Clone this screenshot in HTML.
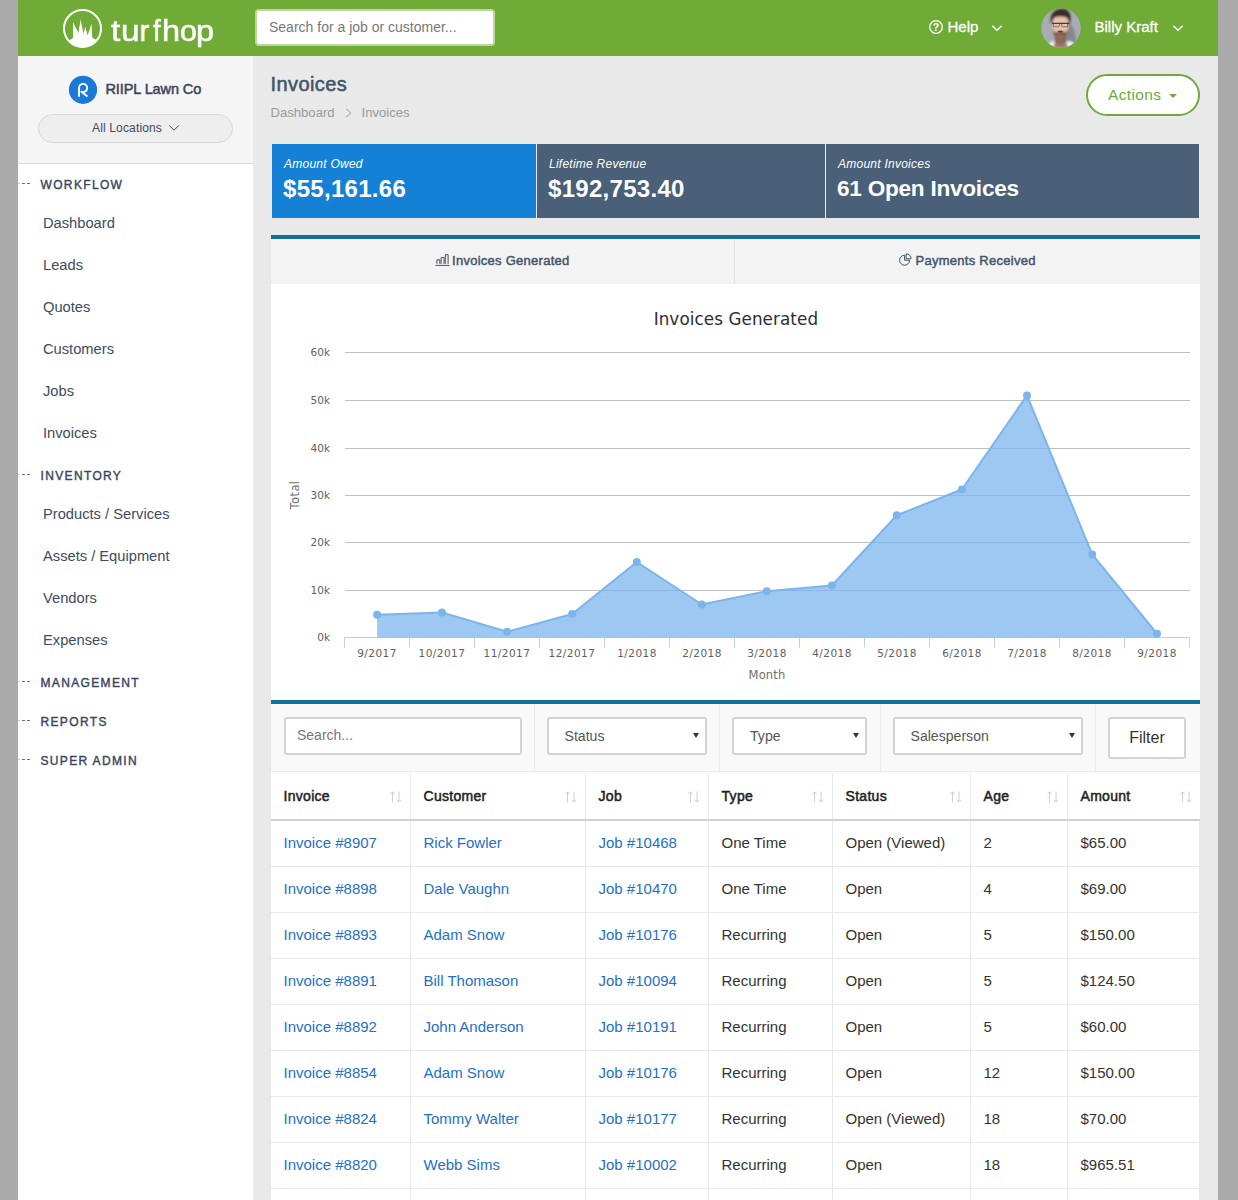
<!DOCTYPE html>
<html lang="en">
<head>
<meta charset="utf-8">
<title>Invoices - turfhop</title>
<style>
*{box-sizing:border-box;margin:0;padding:0}
html,body{width:1238px;height:1200px;overflow:hidden}
body{background:#aaaaaa;font-family:"Liberation Sans",sans-serif;color:#3d4b63;position:relative}
.abs{position:absolute}
#wrap{position:absolute;left:18px;top:0;width:1200px;height:1200px;background:#e9e9e9;overflow:hidden}
/* header */
#hdr{position:absolute;left:0;top:0;width:1200px;height:56px;background:#70ab38}
#hsearch{position:absolute;left:237px;top:9px;width:240px;height:37px;background:#fff;border:2px solid #b9d89a;border-radius:4px;font-size:14px;color:#777;line-height:33px;padding-left:12px;white-space:nowrap}
.hw{position:absolute;color:#fff;font-size:15px;line-height:20px;white-space:nowrap;-webkit-text-stroke:0.3px #fff}
/* sidebar */
#side{position:absolute;left:0;top:56px;width:235px;height:1144px;background:#fff}
#sidetop{position:absolute;left:0;top:0;width:235px;height:108px;background:#f5f5f5;border-bottom:1px solid #dcdcdc}
#co{position:absolute;left:87.5px;top:23px;font-size:14.5px;font-weight:normal;-webkit-text-stroke:0.5px #3a465a;color:#3a465a;line-height:20px;white-space:nowrap;letter-spacing:-0.1px}
#loc{position:absolute;left:20px;top:58px;width:195px;height:29px;border:1px solid #d9d9d9;border-radius:15px;background:#eeeeee;font-size:12px;letter-spacing:0.15px;color:#3d4b63;line-height:27px;text-align:left;padding-left:53px;white-space:nowrap}
.sh{position:absolute;left:22.5px;font-size:12px;font-weight:normal;-webkit-text-stroke:0.4px #3a465f;letter-spacing:1.35px;color:#3a465f;line-height:16px;white-space:nowrap}
.sd{position:absolute;left:0;width:12px;height:1px;margin-top:-2px;background:linear-gradient(90deg,#c9ced6 0,#c9ced6 2.4px,transparent 2.4px,transparent 4.1px,#65728a 4.1px,#65728a 7.3px,transparent 7.3px,transparent 8.7px,#65728a 8.7px,#65728a 11.9px,transparent 11.9px)}
.si{position:absolute;left:25px;font-size:14.7px;color:#3d4b63;line-height:20px;white-space:nowrap}
/* main */
#title{position:absolute;left:252.5px;top:71px;font-size:20px;font-weight:normal;-webkit-text-stroke:0.55px #44536a;color:#44536a;line-height:26px;letter-spacing:0.4px}
#crumb{position:absolute;left:252.5px;top:104px;font-size:13.1px;color:#999;line-height:18px;white-space:nowrap}
#actions{position:absolute;left:1068px;top:74px;width:114px;height:42px;border:2px solid #70ab38;border-radius:21px;background:#fff;color:#70ab38;font-size:15.5px;line-height:37.5px;padding-left:20px;white-space:nowrap;letter-spacing:0.38px}
.card{position:absolute;top:144px;height:74px;color:#fff}
.card i{position:absolute;left:12px;top:13px;font-size:12px;letter-spacing:0.25px;line-height:14px;white-space:nowrap}
.card b{position:absolute;left:11px;top:31.2px;font-size:24px;line-height:28px;white-space:nowrap;letter-spacing:0.3px}
.panel{position:absolute;left:253px;width:929px;background:#fff;border-top:4px solid #0f7098}
.tab{position:absolute;top:0;height:45px;background:#f3f3f3;font-size:13px;color:#44536a;line-height:44px;white-space:nowrap}
.tt{top:0;font-weight:normal;-webkit-text-stroke:0.45px #44536a;letter-spacing:0.27px}

#tp{position:absolute;left:253px;top:700px;width:929px;height:500px;background:#fff;border-top:4px solid #0f7098}
.fc{position:absolute;top:0;height:68px;background:#f9f9f9;border-right:1px solid #ececec;border-bottom:1px solid #ececec}
.inp{position:absolute;top:13px;height:37.5px;background:#fff;border:2px solid #d3d3d3;border-radius:3px;font-size:14.1px;color:#555;line-height:34.5px;white-space:nowrap}
.inp .ar{position:absolute;right:6.5px;top:13.6px;width:0;height:0;border-left:3px solid transparent;border-right:3px solid transparent;border-top:5.6px solid #333}
.th{position:absolute;top:69px;height:48px;border-right:1px solid #e9e9e9;border-bottom:2px solid #cfcfcf;background:#fff;font-size:14px;font-weight:normal;-webkit-text-stroke:0.5px #222;color:#222;line-height:47px;padding-left:12.5px;white-space:nowrap;letter-spacing:0.3px}
.th svg{position:absolute;right:7.4px;top:18px}
.td{position:absolute;height:46px;border-right:1px solid #e9e9e9;border-bottom:1px solid #e9e9e9;background:#fff;font-size:15px;color:#333;line-height:43px;padding-left:12.5px;white-space:nowrap}
.td.l{color:#2470c8}
</style>
</head>
<body>
<div id="wrap">
  <div id="hdr">
    <svg class="abs" style="left:40px;top:4px" width="50" height="50" viewBox="0 0 50 50">
      <circle cx="24.5" cy="24.5" r="18.5" fill="none" stroke="#fff" stroke-width="2"/>
      <path d="M11.2 36.6 L14.6 34.2 L15.1 33.8 L15 18.2 L20.5 29 L22.6 15.3 L25.4 29.8 L27.4 22.8 L29.6 31.6 L33.5 19.8 L34.3 33.6 L37.4 35.6 L39 35 L44 35 L44 46 L5 46 L5 36 L10.4 36 Z" fill="#fff" clip-path="url(#lgc)"/><clipPath id="lgc"><circle cx="24.5" cy="24.5" r="19"/></clipPath>
    </svg>
    <div class="abs" id="brand" style="left:0;top:13px;width:230px;height:36px;font-size:29px;line-height:36px;color:#fff;-webkit-text-stroke:0.5px #fff;white-space:nowrap"><span class="abs" style="left:92.6px;top:0;transform:scaleX(1.15);transform-origin:0 0">t</span><span class="abs" style="left:102.8px;top:0;transform:scaleX(1.15);transform-origin:0 0">u</span><span class="abs" style="left:121.6px;top:0;transform:scaleX(1.0);transform-origin:0 0">r</span><span class="abs" style="left:135.0px;top:0;transform:scaleX(0.95);transform-origin:0 0">f</span><span class="abs" style="left:144.2px;top:0;transform:scaleX(1.12);transform-origin:0 0">h</span><span class="abs" style="left:162.0px;top:0;transform:scaleX(1.05);transform-origin:0 0">o</span><span class="abs" style="left:178.0px;top:0;transform:scaleX(1.12);transform-origin:0 0">p</span></div>
    <div id="hsearch">Search for a job or customer...</div>
    <svg class="abs" style="left:909.6px;top:18.6px" width="16" height="16" viewBox="0 0 16 16">
      <circle cx="8" cy="8" r="6.3" fill="none" stroke="#fff" stroke-width="1.3"/>
      <text x="8" y="11.7" font-size="10.5" font-weight="bold" fill="#fff" text-anchor="middle" font-family="Liberation Sans, sans-serif">?</text>
    </svg>
    <div class="hw" style="left:929.5px;top:17px">Help</div>
    <svg class="abs" style="left:973px;top:23.6px" width="12" height="8" viewBox="0 0 12 8"><path d="M1.3 1.8 L6 6.3 L10.7 1.8" fill="none" stroke="#fff" stroke-width="1.4"/></svg>
    <svg class="abs" style="left:1023px;top:8px" width="40" height="40" viewBox="0 0 40 40">
      <defs>
        <clipPath id="avc"><circle cx="20" cy="20" r="19.8"/></clipPath>
        <filter id="avb" x="-20%" y="-20%" width="140%" height="140%"><feGaussianBlur stdDeviation="0.82"/></filter>
      </defs>
      <g clip-path="url(#avc)">
        <rect width="40" height="40" fill="#a8abb2"/>
        <g filter="url(#avb)">
          <path d="M27 14 Q33 18 34 26 L36 40 L24 40 Z" fill="#85888f"/>
          <path d="M11 33.5 Q6.5 35 4 40 L36 40 Q34.5 35 29 33.3 Z" fill="#f3f1f0"/>
          <path d="M14 28 L13.6 35.5 Q19 41 25.4 35 L25 28 Z" fill="#8e6858"/>
          <path d="M13.6 35 L12.5 40 L27 40 L25.4 34.5 Q19 38.5 13.6 35 Z" fill="#a57d6c"/>
          <path d="M11.6 14 Q11.2 8 19.4 7.6 Q27.4 8 27.2 14 L27 22 Q26.6 31.6 19.4 31.8 Q12.2 31.6 11.8 22 Z" fill="#e6c2ad"/>
          <path d="M11.7 20.5 Q12 31.5 19.4 32 Q26.8 31.5 27.1 20.5 Q25.5 25.5 22.6 23.6 Q19.4 22.6 16.2 23.6 Q13.3 25.5 11.7 20.5 Z" fill="#6f5242" fill-opacity="0.9"/>
          <path d="M15.3 26 Q19.4 28.8 23.5 26 Q22.5 30.6 19.4 30.8 Q16.3 30.6 15.3 26 Z" fill="#c39a85" fill-opacity="0.35"/>
          <path d="M9.8 15.5 Q8.6 6.5 13.5 3.2 Q18 0 23.5 1 Q28.6 2.4 29.6 8.6 Q30 12.5 28.6 16.4 L27.3 15 Q27.6 11 25.6 9.6 Q22 8 17.2 8.6 Q13.4 8.8 12.2 11 L11.5 14.5 Z" fill="#3b2c25"/>
        </g>
        <path d="M11 15.4 H28" stroke="#2a2626" stroke-width="1.2" stroke-opacity="0.85"/>
        <path d="M12.3 15.3 V18 Q12.4 18.8 13.3 18.8 H17.3 Q18.3 18.8 18.4 18 V15.3 M20.6 15.3 V18 Q20.7 18.8 21.6 18.8 H25.6 Q26.6 18.8 26.7 18 V15.3" fill="none" stroke="#3a3434" stroke-width="0.8" stroke-opacity="0.7"/>
        <ellipse cx="19.3" cy="23.6" rx="2.6" ry="0.8" fill="#4a2226" fill-opacity="0.8"/>
      </g>
    </svg>
    <div class="hw" style="left:1076.5px;top:17px">Billy Kraft</div>
    <svg class="abs" style="left:1154px;top:23.6px" width="12" height="8" viewBox="0 0 12 8"><path d="M1.3 1.8 L6 6.3 L10.7 1.8" fill="none" stroke="#fff" stroke-width="1.4"/></svg>
  </div>
  <div id="side">
    <div id="sidetop">
      <svg class="abs" style="left:50px;top:19px" width="30" height="30" viewBox="0 0 30 30">
        <circle cx="15" cy="14.8" r="14.1" fill="#1b7ad9"/>
        <path d="M11 21.8 V12.9 A4.1 4.1 0 1 1 13.4 16.7 L19.5 21.4" fill="none" stroke="#fff" stroke-width="1.9" stroke-linejoin="round"/>
      </svg>
      <div id="co">RIIPL Lawn Co</div>
      <div id="loc">All Locations
        <svg class="abs" style="left:128.7px;top:8.8px" width="12" height="8" viewBox="0 0 12 8"><path d="M1.3 1.5 L6 6.2 L10.7 1.5" fill="none" stroke="#3d4b63" stroke-width="1"/></svg>
      </div>
    </div>
    <div class="sd" style="top:128.5px"></div><div class="sh" style="top:120.5px">WORKFLOW</div>
    <div class="si" style="top:157px">Dashboard</div>
    <div class="si" style="top:199px">Leads</div>
    <div class="si" style="top:241px">Quotes</div>
    <div class="si" style="top:283px">Customers</div>
    <div class="si" style="top:325px">Jobs</div>
    <div class="si" style="top:367px">Invoices</div>
    <div class="sd" style="top:419.5px"></div><div class="sh" style="top:411.5px">INVENTORY</div>
    <div class="si" style="top:448px">Products / Services</div>
    <div class="si" style="top:490px">Assets / Equipment</div>
    <div class="si" style="top:532px">Vendors</div>
    <div class="si" style="top:574px">Expenses</div>
    <div class="sd" style="top:626.5px"></div><div class="sh" style="top:618.5px">MANAGEMENT</div>
    <div class="sd" style="top:665.5px"></div><div class="sh" style="top:657.5px">REPORTS</div>
    <div class="sd" style="top:704.5px"></div><div class="sh" style="top:696.5px">SUPER ADMIN</div>
  </div>
  <div id="title">Invoices</div>
  <div id="crumb">Dashboard<svg style="margin:0 9.5px 0 10.5px;vertical-align:-0.5px" width="7" height="10" viewBox="0 0 7 10"><path d="M1 0.7 L5.8 5 L1 9.3" fill="none" stroke="#999" stroke-width="1"/></svg>Invoices</div>
  <div id="actions">Actions<span class="abs" style="left:81.3px;top:18px;width:0;height:0;border-left:4.3px solid transparent;border-right:4.3px solid transparent;border-top:4.2px solid #70ab38"></span></div>
  <div class="card" style="left:254px;width:264px;background:#1581d6"><i>Amount Owed</i><b>$55,161.66</b></div>
  <div class="card" style="left:519px;width:288px;background:#4a5f78"><i>Lifetime Revenue</i><b>$192,753.40</b></div>
  <div class="card" style="left:808px;width:373px;background:#4a5f78"><i>Amount Invoices</i><b style="font-size:22.6px;letter-spacing:-0.25px">61 Open Invoices</b></div>
  <div class="panel" style="top:235px;height:465px">
    <div class="tab" style="left:0;width:463px">
      <svg class="abs" style="left:163.5px;top:15px" width="15" height="12" viewBox="0 0 15 12"><path d="M0.4 11.4 H14.6 M1.9 9.9 V5.8 H4.8 V9.9 M6.1 9.9 V3.6 H9 V9.9 M10.3 9.9 V0.7 H13.1 V9.9" fill="none" stroke="#44536a" stroke-width="1"/></svg>
      <span class="abs tt" style="left:181px">Invoices Generated</span></div>
    <div class="abs" style="left:463px;top:0;width:1px;height:45px;background:#e0e0e0"></div>
    <div class="tab" style="left:464px;width:465px">
      <svg class="abs" style="left:163.5px;top:13.5px" width="14" height="14" viewBox="0 0 14 14"><path d="M5.6 2.2 A5 5 0 1 0 10.6 7.2 H5.6 Z M7.1 0.8 A5 5 0 0 1 12.1 5.8 H7.1 Z" fill="none" stroke="#44536a" stroke-width="1"/></svg>
      <span class="abs tt" style="left:180.5px">Payments Received</span></div>
    <svg class="abs" style="left:0;top:45px" width="929" height="416" viewBox="0 0 929 416" font-family="DejaVu Sans, Liberation Sans, sans-serif"><rect width="929" height="416" fill="#fff"/><path d="M74.0 68.5 H919.0" stroke="#c0c0c0" stroke-width="1"/><path d="M74.0 116.5 H919.0" stroke="#c0c0c0" stroke-width="1"/><path d="M74.0 164.5 H919.0" stroke="#c0c0c0" stroke-width="1"/><path d="M74.0 211.5 H919.0" stroke="#c0c0c0" stroke-width="1"/><path d="M74.0 258.5 H919.0" stroke="#c0c0c0" stroke-width="1"/><path d="M74.0 306.5 H919.0" stroke="#c0c0c0" stroke-width="1"/><path d="M73.5 353.5 H918.5" stroke="#c0d0e0" stroke-width="1"/><path d="M73.5 353.5 v10" stroke="#c0d0e0" stroke-width="1"/><path d="M138.5 353.5 v10" stroke="#c0d0e0" stroke-width="1"/><path d="M203.5 353.5 v10" stroke="#c0d0e0" stroke-width="1"/><path d="M268.5 353.5 v10" stroke="#c0d0e0" stroke-width="1"/><path d="M333.5 353.5 v10" stroke="#c0d0e0" stroke-width="1"/><path d="M398.5 353.5 v10" stroke="#c0d0e0" stroke-width="1"/><path d="M463.5 353.5 v10" stroke="#c0d0e0" stroke-width="1"/><path d="M528.5 353.5 v10" stroke="#c0d0e0" stroke-width="1"/><path d="M593.5 353.5 v10" stroke="#c0d0e0" stroke-width="1"/><path d="M658.5 353.5 v10" stroke="#c0d0e0" stroke-width="1"/><path d="M723.5 353.5 v10" stroke="#c0d0e0" stroke-width="1"/><path d="M788.5 353.5 v10" stroke="#c0d0e0" stroke-width="1"/><path d="M853.5 353.5 v10" stroke="#c0d0e0" stroke-width="1"/><path d="M918.5 353.5 v10" stroke="#c0d0e0" stroke-width="1"/><path d="M106.1 330.7 L171.0 328.5 L236.2 347.8 L301.2 330.0 L365.8 278.0 L430.8 320.5 L495.7 307.2 L560.9 301.5 L625.8 231.3 L690.8 205.5 L756.0 111.4 L821.2 270.4 L886.0 349.7 L886.0 353.5 L106.1 353.5 Z" fill="#7cb5ec" fill-opacity="0.75"/><path d="M106.1 330.7 L171.0 328.5 L236.2 347.8 L301.2 330.0 L365.8 278.0 L430.8 320.5 L495.7 307.2 L560.9 301.5 L625.8 231.3 L690.8 205.5 L756.0 111.4 L821.2 270.4 L886.0 349.7" fill="none" stroke="#7cb5ec" stroke-width="2" stroke-linejoin="round" stroke-linecap="round"/><circle cx="106.1" cy="330.7" r="4" fill="#7cb5ec"/><circle cx="171.0" cy="328.5" r="4" fill="#7cb5ec"/><circle cx="236.2" cy="347.8" r="4" fill="#7cb5ec"/><circle cx="301.2" cy="330.0" r="4" fill="#7cb5ec"/><circle cx="365.8" cy="278.0" r="4" fill="#7cb5ec"/><circle cx="430.8" cy="320.5" r="4" fill="#7cb5ec"/><circle cx="495.7" cy="307.2" r="4" fill="#7cb5ec"/><circle cx="560.9" cy="301.5" r="4" fill="#7cb5ec"/><circle cx="625.8" cy="231.3" r="4" fill="#7cb5ec"/><circle cx="690.8" cy="205.5" r="4" fill="#7cb5ec"/><circle cx="756.0" cy="111.4" r="4" fill="#7cb5ec"/><circle cx="821.2" cy="270.4" r="4" fill="#7cb5ec"/><circle cx="886.0" cy="349.7" r="4" fill="#7cb5ec"/><text x="464.9" y="40.5" font-size="16.8" fill="#2d2d33" text-anchor="middle" letter-spacing="0.08">Invoices Generated</text><text x="59" y="72.0" font-size="10.5" fill="#606060" text-anchor="end">60k</text><text x="59" y="120.0" font-size="10.5" fill="#606060" text-anchor="end">50k</text><text x="59" y="168.0" font-size="10.5" fill="#606060" text-anchor="end">40k</text><text x="59" y="215.0" font-size="10.5" fill="#606060" text-anchor="end">30k</text><text x="59" y="262.0" font-size="10.5" fill="#606060" text-anchor="end">20k</text><text x="59" y="310.0" font-size="10.5" fill="#606060" text-anchor="end">10k</text><text x="59" y="357.0" font-size="10.5" fill="#606060" text-anchor="end">0k</text><text x="106.0" y="373" font-size="10.5" fill="#606060" text-anchor="middle" letter-spacing="0.45">9/2017</text><text x="171.0" y="373" font-size="10.5" fill="#606060" text-anchor="middle" letter-spacing="0.45">10/2017</text><text x="236.0" y="373" font-size="10.5" fill="#606060" text-anchor="middle" letter-spacing="0.45">11/2017</text><text x="301.0" y="373" font-size="10.5" fill="#606060" text-anchor="middle" letter-spacing="0.45">12/2017</text><text x="366.0" y="373" font-size="10.5" fill="#606060" text-anchor="middle" letter-spacing="0.45">1/2018</text><text x="431.0" y="373" font-size="10.5" fill="#606060" text-anchor="middle" letter-spacing="0.45">2/2018</text><text x="496.0" y="373" font-size="10.5" fill="#606060" text-anchor="middle" letter-spacing="0.45">3/2018</text><text x="561.0" y="373" font-size="10.5" fill="#606060" text-anchor="middle" letter-spacing="0.45">4/2018</text><text x="626.0" y="373" font-size="10.5" fill="#606060" text-anchor="middle" letter-spacing="0.45">5/2018</text><text x="691.0" y="373" font-size="10.5" fill="#606060" text-anchor="middle" letter-spacing="0.45">6/2018</text><text x="756.0" y="373" font-size="10.5" fill="#606060" text-anchor="middle" letter-spacing="0.45">7/2018</text><text x="821.0" y="373" font-size="10.5" fill="#606060" text-anchor="middle" letter-spacing="0.45">8/2018</text><text x="886.0" y="373" font-size="10.5" fill="#606060" text-anchor="middle" letter-spacing="0.45">9/2018</text><text x="496" y="395" font-size="11.5" fill="#707070" text-anchor="middle" letter-spacing="0.15">Month</text><text transform="translate(27.5 211) rotate(-90)" font-size="11.5" fill="#707070" text-anchor="middle" letter-spacing="0.4">Total</text></svg>
  </div>
  <div id="tp">
  <div class="fc" style="left:0px;width:264px;"></div>
  <div class="fc" style="left:264px;width:185px;"></div>
  <div class="fc" style="left:449px;width:161px;"></div>
  <div class="fc" style="left:610px;width:215px;"></div>
  <div class="fc" style="left:825px;width:104px;border-right:none;"></div>
  <div class="inp" style="left:13px;width:238px;padding-left:11px;color:#777;font-size:14px;line-height:32px">Search...</div>
  <div class="inp" style="left:276px;width:160px;padding-left:15.5px">Status<span class="ar"></span></div>
  <div class="inp" style="left:461px;width:135px;padding-left:16px">Type<span class="ar"></span></div>
  <div class="inp" style="left:622px;width:190px;padding-left:15.5px">Salesperson<span class="ar"></span></div>
  <div class="inp" style="left:837px;width:78px;height:41.5px;padding-left:0;text-align:center;font-size:16px;color:#333;line-height:38.5px">Filter</div>
  <div class="th" style="left:0px;width:140px;">Invoice<svg width="14" height="12" viewBox="0 0 14 12"><path d="M3.5 11.5 V1 M1.3 3.3 L3.5 0.8 L5.7 3.3 M10 0.5 V11 M7.8 8.7 L10 11.2 L12.2 8.7" fill="none" stroke="#cfcfcf" stroke-width="1"/></svg></div>
  <div class="th" style="left:140px;width:175px;">Customer<svg width="14" height="12" viewBox="0 0 14 12"><path d="M3.5 11.5 V1 M1.3 3.3 L3.5 0.8 L5.7 3.3 M10 0.5 V11 M7.8 8.7 L10 11.2 L12.2 8.7" fill="none" stroke="#cfcfcf" stroke-width="1"/></svg></div>
  <div class="th" style="left:315px;width:123px;">Job<svg width="14" height="12" viewBox="0 0 14 12"><path d="M3.5 11.5 V1 M1.3 3.3 L3.5 0.8 L5.7 3.3 M10 0.5 V11 M7.8 8.7 L10 11.2 L12.2 8.7" fill="none" stroke="#cfcfcf" stroke-width="1"/></svg></div>
  <div class="th" style="left:438px;width:124px;">Type<svg width="14" height="12" viewBox="0 0 14 12"><path d="M3.5 11.5 V1 M1.3 3.3 L3.5 0.8 L5.7 3.3 M10 0.5 V11 M7.8 8.7 L10 11.2 L12.2 8.7" fill="none" stroke="#cfcfcf" stroke-width="1"/></svg></div>
  <div class="th" style="left:562px;width:138px;">Status<svg width="14" height="12" viewBox="0 0 14 12"><path d="M3.5 11.5 V1 M1.3 3.3 L3.5 0.8 L5.7 3.3 M10 0.5 V11 M7.8 8.7 L10 11.2 L12.2 8.7" fill="none" stroke="#cfcfcf" stroke-width="1"/></svg></div>
  <div class="th" style="left:700px;width:97px;">Age<svg width="14" height="12" viewBox="0 0 14 12"><path d="M3.5 11.5 V1 M1.3 3.3 L3.5 0.8 L5.7 3.3 M10 0.5 V11 M7.8 8.7 L10 11.2 L12.2 8.7" fill="none" stroke="#cfcfcf" stroke-width="1"/></svg></div>
  <div class="th" style="left:797px;width:132px;border-right:none;">Amount<svg width="14" height="12" viewBox="0 0 14 12"><path d="M3.5 11.5 V1 M1.3 3.3 L3.5 0.8 L5.7 3.3 M10 0.5 V11 M7.8 8.7 L10 11.2 L12.2 8.7" fill="none" stroke="#cfcfcf" stroke-width="1"/></svg></div>
  <div class="td l" style="left:0px;top:117px;width:140px;">Invoice #8907</div>
  <div class="td l" style="left:140px;top:117px;width:175px;">Rick Fowler</div>
  <div class="td l" style="left:315px;top:117px;width:123px;">Job #10468</div>
  <div class="td" style="left:438px;top:117px;width:124px;">One Time</div>
  <div class="td" style="left:562px;top:117px;width:138px;">Open (Viewed)</div>
  <div class="td" style="left:700px;top:117px;width:97px;">2</div>
  <div class="td" style="left:797px;top:117px;width:132px;">$65.00</div>
  <div class="td l" style="left:0px;top:163px;width:140px;">Invoice #8898</div>
  <div class="td l" style="left:140px;top:163px;width:175px;">Dale Vaughn</div>
  <div class="td l" style="left:315px;top:163px;width:123px;">Job #10470</div>
  <div class="td" style="left:438px;top:163px;width:124px;">One Time</div>
  <div class="td" style="left:562px;top:163px;width:138px;">Open</div>
  <div class="td" style="left:700px;top:163px;width:97px;">4</div>
  <div class="td" style="left:797px;top:163px;width:132px;">$69.00</div>
  <div class="td l" style="left:0px;top:209px;width:140px;">Invoice #8893</div>
  <div class="td l" style="left:140px;top:209px;width:175px;">Adam Snow</div>
  <div class="td l" style="left:315px;top:209px;width:123px;">Job #10176</div>
  <div class="td" style="left:438px;top:209px;width:124px;">Recurring</div>
  <div class="td" style="left:562px;top:209px;width:138px;">Open</div>
  <div class="td" style="left:700px;top:209px;width:97px;">5</div>
  <div class="td" style="left:797px;top:209px;width:132px;">$150.00</div>
  <div class="td l" style="left:0px;top:255px;width:140px;">Invoice #8891</div>
  <div class="td l" style="left:140px;top:255px;width:175px;">Bill Thomason</div>
  <div class="td l" style="left:315px;top:255px;width:123px;">Job #10094</div>
  <div class="td" style="left:438px;top:255px;width:124px;">Recurring</div>
  <div class="td" style="left:562px;top:255px;width:138px;">Open</div>
  <div class="td" style="left:700px;top:255px;width:97px;">5</div>
  <div class="td" style="left:797px;top:255px;width:132px;">$124.50</div>
  <div class="td l" style="left:0px;top:301px;width:140px;">Invoice #8892</div>
  <div class="td l" style="left:140px;top:301px;width:175px;">John Anderson</div>
  <div class="td l" style="left:315px;top:301px;width:123px;">Job #10191</div>
  <div class="td" style="left:438px;top:301px;width:124px;">Recurring</div>
  <div class="td" style="left:562px;top:301px;width:138px;">Open</div>
  <div class="td" style="left:700px;top:301px;width:97px;">5</div>
  <div class="td" style="left:797px;top:301px;width:132px;">$60.00</div>
  <div class="td l" style="left:0px;top:347px;width:140px;">Invoice #8854</div>
  <div class="td l" style="left:140px;top:347px;width:175px;">Adam Snow</div>
  <div class="td l" style="left:315px;top:347px;width:123px;">Job #10176</div>
  <div class="td" style="left:438px;top:347px;width:124px;">Recurring</div>
  <div class="td" style="left:562px;top:347px;width:138px;">Open</div>
  <div class="td" style="left:700px;top:347px;width:97px;">12</div>
  <div class="td" style="left:797px;top:347px;width:132px;">$150.00</div>
  <div class="td l" style="left:0px;top:393px;width:140px;">Invoice #8824</div>
  <div class="td l" style="left:140px;top:393px;width:175px;">Tommy Walter</div>
  <div class="td l" style="left:315px;top:393px;width:123px;">Job #10177</div>
  <div class="td" style="left:438px;top:393px;width:124px;">Recurring</div>
  <div class="td" style="left:562px;top:393px;width:138px;">Open (Viewed)</div>
  <div class="td" style="left:700px;top:393px;width:97px;">18</div>
  <div class="td" style="left:797px;top:393px;width:132px;">$70.00</div>
  <div class="td l" style="left:0px;top:439px;width:140px;">Invoice #8820</div>
  <div class="td l" style="left:140px;top:439px;width:175px;">Webb Sims</div>
  <div class="td l" style="left:315px;top:439px;width:123px;">Job #10002</div>
  <div class="td" style="left:438px;top:439px;width:124px;">Recurring</div>
  <div class="td" style="left:562px;top:439px;width:138px;">Open</div>
  <div class="td" style="left:700px;top:439px;width:97px;">18</div>
  <div class="td" style="left:797px;top:439px;width:132px;">$965.51</div>
  <div class="td l" style="left:0px;top:485px;width:140px;"></div>
  <div class="td l" style="left:140px;top:485px;width:175px;"></div>
  <div class="td l" style="left:315px;top:485px;width:123px;"></div>
  <div class="td" style="left:438px;top:485px;width:124px;"></div>
  <div class="td" style="left:562px;top:485px;width:138px;"></div>
  <div class="td" style="left:700px;top:485px;width:97px;"></div>
  <div class="td" style="left:797px;top:485px;width:132px;"></div>
  </div>
</div>
</body>
</html>
